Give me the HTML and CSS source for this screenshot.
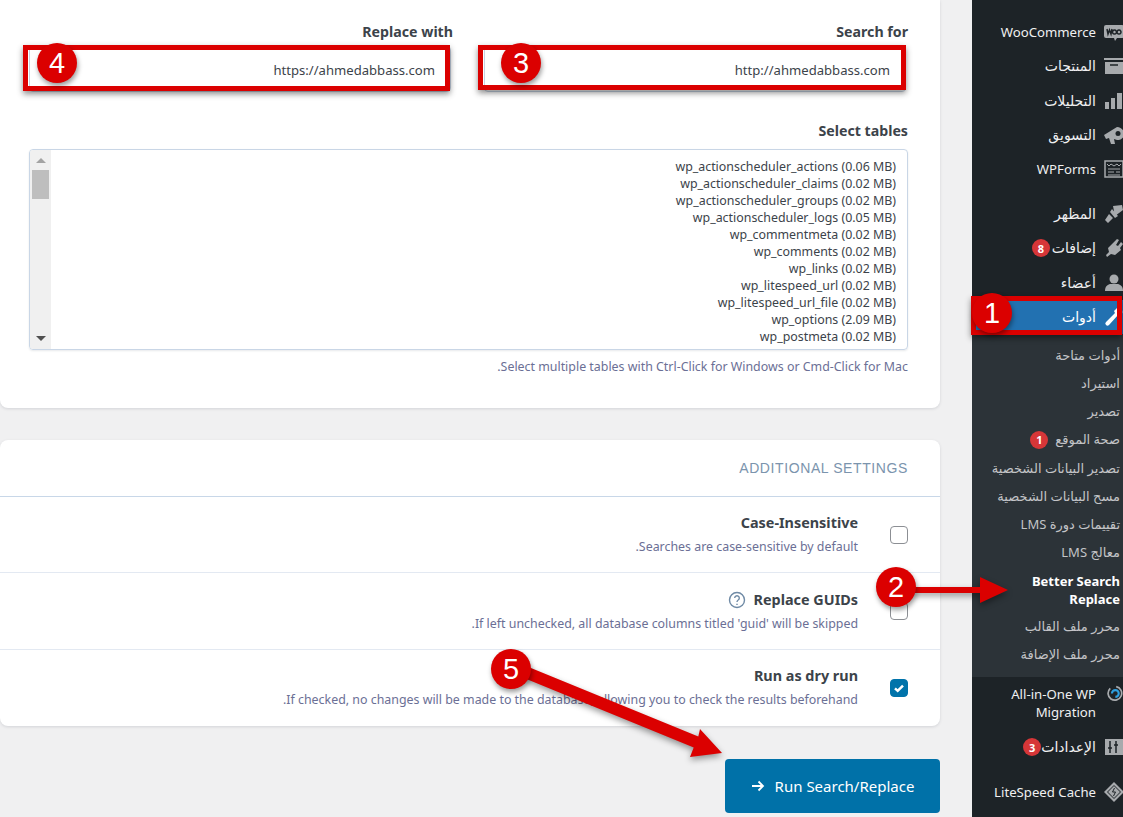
FILE: index.html
```html
<!DOCTYPE html>
<html lang="ar" dir="rtl">
<head>
<meta charset="utf-8">
<title>Better Search Replace</title>
<link rel="stylesheet" href="styles.css">
</head>
<body>
<aside class="sidebar">
  <nav class="menu menu-top">
    <a class="item"><span class="label latin" dir="ltr">WooCommerce</span><svg class="ic" viewBox="0 0 20 20"><path class="f" d="M2 3h16a2 2 0 0 1 2 2v9a2 2 0 0 1-2 2h-5l-2 3-1-3H2a2 2 0 0 1-2-2V5a2 2 0 0 1 2-2z"/><path class="k" d="M3 7l1 5 1.500-4 1.500 4 1-5M10.500 8a2 2 0 1 0 .01 0M15 8a2 2 0 1 0 .01 0"/></svg></a>
    <a class="item"><span class="label">المنتجات</span><svg class="ic" viewBox="0 0 20 20"><path class="f" d="M0 2h20v2H0zM1 6h18v12H1z"/><path class="k" d="M6 9h8"/></svg></a>
    <a class="item"><span class="label">التحليلات</span><svg class="ic" viewBox="0 0 20 20"><path class="f" d="M1 11h4v7H1zM7 7h4v11H7zM13 2h5v16h-5z"/></svg></a>
    <a class="item"><span class="label">التسويق</span><svg class="ic" viewBox="0 0 20 20"><path class="f" d="M0 10L13 2c4 0 7 3 7 7s-3 6-7 6l-3-1 1 5H7l-2-6-3 1z"/><circle class="d" cx="14" cy="8.500" r="2.500"/></svg></a>
    <a class="item"><span class="label latin" dir="ltr">WPForms</span><svg class="ic" viewBox="0 0 20 20"><path class="o" d="M1 2h18v16H1z"/><path class="k2" d="M3 5l2 2 2-2 3 2 3-2 2 2 2-2M4 10h12M4 13h6M12 13h4M4 16h12"/></svg></a>
  </nav>
  <nav class="menu menu-mid">
    <a class="item"><span class="label">المظهر</span><svg class="ic" viewBox="0 0 20 20"><path class="f" d="M9 2l9-1 1 5-8 6zM8 5l6 7-3 2-5-6zM5 10l4 4-5 5-3-3z"/></svg></a>
    <a class="item"><span class="label">إضافات</span><span class="badge badge-plugins">8</span><svg class="ic" viewBox="0 0 20 20"><path class="f" d="M13 1l2 1-3 5 2 1 3-4 2 2-3 4 1 2-6 5-4-1-4 3-1-2 3-3-1-4z"/></svg></a>
    <a class="item"><span class="label">أعضاء</span><svg class="ic" viewBox="0 0 20 20"><circle class="f" cx="10" cy="6" r="4.500"/><path class="f" d="M1 18c0-5 3-7 6-7h6c3 0 6 2 6 7z"/></svg></a>
    <a class="item item-active"><span class="label">أدوات</span><svg class="ic" viewBox="0 0 20 20"><path class="w" d="M15 1a4 4 0 0 1 2 7l-1 1-2-1-9 10a2 2 0 0 1-3-3l9-9-1-2 3-3z"/></svg></a>
  </nav>
  <nav class="submenu">
    <a class="sub">أدوات متاحة</a>
    <a class="sub">استيراد</a>
    <a class="sub">تصدير</a>
    <a class="sub">صحة الموقع<span class="badge">1</span></a>
    <a class="sub">تصدير البيانات الشخصية</a>
    <a class="sub">مسح البيانات الشخصية</a>
    <a class="sub">تقييمات دورة LMS</a>
    <a class="sub">معالج LMS</a>
    <a class="sub sub-current" dir="rtl">Better Search Replace</a>
    <a class="sub">محرر ملف القالب</a>
    <a class="sub">محرر ملف الإضافة</a>
  </nav>
  <nav class="menu">
    <a class="item item-tall"><span class="label latin">All-in-One WP Migration</span><svg class="ic ic-small" viewBox="0 0 20 20"><path class="ring" d="M5 4a8 8 0 1 0 7-2"/><path class="ring-blue" d="M7 10a4 4 0 1 1 4 4"/></svg></a>
    <a class="item item-settings"><span class="label">الإعدادات</span><span class="badge badge-tight">3</span><svg class="ic" viewBox="0 0 20 20"><path class="f" d="M1 2h18v16H1z"/><path class="k" d="M6 4v12M4 11h4M12 4v12M10 8h4"/></svg></a>
    <a class="item item-last"><span class="label latin" dir="ltr">LiteSpeed Cache</span><svg class="ic" viewBox="0 0 20 20"><path class="f" d="M10 0l10 10-10 10L0 10z"/><path class="k-thin" d="M10 3.500L16.500 10 10 16.500 3.500 10z"/><path class="k-thin" d="M10.500 6l-2 4h3l-2 4"/></svg></a>
  </nav>
</aside>

<main class="content">
  <section class="card card-form">
    <div class="fields">
      <div class="group">
        <div class="field-label">Search for</div>
        <div class="field"><span dir="ltr">http://ahmedabbass.com</span></div>
      </div>
      <div class="group">
        <div class="field-label">Replace with</div>
        <div class="field"><span dir="ltr">https://ahmedabbass.com</span></div>
      </div>
    </div>
    <div class="field-label tables-label">Select tables</div>
    <div class="tables">
      <div class="rows">
        <div dir="ltr">wp_actionscheduler_actions (0.06 MB)</div>
        <div dir="ltr">wp_actionscheduler_claims (0.02 MB)</div>
        <div dir="ltr">wp_actionscheduler_groups (0.02 MB)</div>
        <div dir="ltr">wp_actionscheduler_logs (0.05 MB)</div>
        <div dir="ltr">wp_commentmeta (0.02 MB)</div>
        <div dir="ltr">wp_comments (0.02 MB)</div>
        <div dir="ltr">wp_links (0.02 MB)</div>
        <div dir="ltr">wp_litespeed_url (0.02 MB)</div>
        <div dir="ltr">wp_litespeed_url_file (0.02 MB)</div>
        <div dir="ltr">wp_options (2.09 MB)</div>
        <div dir="ltr">wp_postmeta (0.02 MB)</div>
      </div>
      <div class="scrollbar">
        <span class="tri tri-up"></span>
        <span class="thumb"></span>
        <span class="tri tri-down"></span>
      </div>
    </div>
    <p class="hint">Select multiple tables with Ctrl-Click for Windows or Cmd-Click for Mac.</p>
  </section>

  <section class="card card-settings">
    <h2 class="settings-title">Additional Settings</h2>
    <div class="setting setting-first">
      <span class="check"></span>
      <div class="setting-text">
        <div class="setting-name">Case-Insensitive</div>
        <div class="setting-desc">Searches are case-sensitive by default.</div>
      </div>
    </div>
    <div class="setting">
      <span class="check"></span>
      <div class="setting-text">
        <div class="setting-name">Replace GUIDs<svg class="help" viewBox="0 0 18 18"><circle cx="9" cy="9" r="7.500"/><path d="M6.700 7a2.300 2.300 0 1 1 3.500 2c-.8.500-1.200 1-1.200 2"/><path d="M9 12.700v1.200"/></svg></div>
        <div class="setting-desc">If left unchecked, all database columns titled 'guid' will be skipped.</div>
      </div>
    </div>
    <div class="setting setting-last">
      <span class="check check-on"><svg viewBox="0 0 18 18"><path d="M4.500 9.500l3 2.700 6-6"/></svg></span>
      <div class="setting-text">
        <div class="setting-name">Run as dry run</div>
        <div class="setting-desc">If checked, no changes will be made to the database, allowing you to check the results beforehand.</div>
      </div>
    </div>
  </section>

  <div class="actions">
    <a class="run"><span>Run Search/Replace</span><svg viewBox="0 0 14 14"><path d="M1 7h11M7.500 2.500L12 7l-4.500 4.500"/></svg></a>
  </div>
</main>

<div class="mark mark-box mark-box-4"></div>
<div class="mark mark-box mark-box-3"></div>
<div class="mark mark-box mark-box-1"></div>
<svg class="arrows" viewBox="0 0 1123 817">
  <path d="M912 587h68v-10l28 13-28 13v-10h-68z"/>
  <path d="M527.300 666.500L698.300 736.500L700 729L722 753L690 757L693.700 747.500L522.700 677.500z"/>
</svg>
<div class="mark pin pin-4">4</div>
<div class="mark pin pin-3">3</div>
<div class="mark pin pin-1">1</div>
<div class="mark pin pin-2">2</div>
<div class="mark pin pin-5">5</div>
</body>
</html>
```
FILE: styles.css
```css
* { box-sizing: border-box; }
html, body { margin: 0; padding: 0; }
body {
  position: relative;
  display: flex;
  width: 1123px;
  height: 817px;
  overflow: hidden;
  background: #f0f0f1;
  font-family: "Noto Sans", "DejaVu Sans", sans-serif;
  font-size: 13px;
  color: #3c434a;
}

/* sidebar */
.sidebar {
  flex: 0 0 151px;
  background: #1d2327;
  padding-top: 15px;
  margin-left: 32px;
  overflow: hidden;
}
.menu-top { padding-bottom: 10.500px; }
.item {
  display: flex;
  align-items: center;
  min-height: 34.300px;
  padding-right: 27px;
  position: relative;
  color: #f0f0f1;
  font-size: 14px;
  line-height: 18px;
}
.item-active { background: #2271b1; color: #fff; }
.item-tall { padding: 8px 27px 8px 6px; }
.item-settings { margin-top: 1px; }
.item-last { margin-top: 11px; }
.label { display: block; }
.latin { font-size: 13.200px; }
.ic {
  position: absolute;
  right: -1px;
  top: 7px;
  width: 20px;
  height: 20px;
}
.ic-small { width: 17px; height: 17px; right: 0; top: 8px; }
.f { fill: #a7aaad; }
.d { fill: #1d2327; }
.w { fill: #fff; }
.k { fill: none; stroke: #1d2327; stroke-width: 1.500; }
.k-thin { fill: none; stroke: #1d2327; stroke-width: 1; }
.k2 { fill: none; stroke: #a7aaad; stroke-width: 1; }
.o { fill: none; stroke: #a7aaad; stroke-width: 1.500; }
.ring { fill: none; stroke: #a7aaad; stroke-width: 2; }
.ring-blue { fill: none; stroke: #2e9fe0; stroke-width: 2.500; }
.badge {
  display: inline-flex;
  align-items: center;
  justify-content: center;
  width: 18px;
  height: 18px;
  margin-right: 7px;
  border-radius: 50%;
  background: #d63638;
  color: #fff;
  font-size: 11px;
  font-weight: 700;
  line-height: 1;
}
.badge-plugins { margin-right: 2px; }
.badge-tight { margin-right: 0; }
.submenu {
  background: #2c3338;
  padding: 6.500px 0 9px;
}
.sub {
  display: block;
  padding: 5px 3px 5px 8px;
  color: #c3c4c7;
  font-size: 13px;
  line-height: 18.150px;
}
.sub-current {
  color: #fff;
  font-weight: 700;
  font-size: 13px;
  text-align: right;
  padding-top: 6px;
  padding-bottom: 3px;
  padding-left: 24px;
}

/* content */
.content { flex: 0 0 940px; }
.card {
  background: #fff;
  border-radius: 8px;
  box-shadow: 0 1px 3px rgba(60, 70, 90, .16);
}
.card-form {
  border-radius: 0 0 8px 8px;
  height: 408px;
  padding: 23px 32px 0 29px;
}
.fields {
  display: grid;
  grid-template-columns: 424px 424px;
  column-gap: 31px;
}
.field-label {
  font-size: 14.200px;
  font-weight: 700;
  line-height: 18px;
  color: #3c434a;
}
.field {
  margin: 5px 2px 0 0;
  height: 46px;
  padding: 1px 15px 0;
  display: flex;
  align-items: center;
  background: #fff;
  border: 1px solid #c5d2e2;
  border-radius: 4px;
  font-size: 13.100px;
  color: #3c434a;
}
.tables-label { margin-top: 30px; }
.tables {
  display: flex;
  justify-content: space-between;
  margin: 9px 0 0;
  height: 201px;
  border: 1px solid #c9d6e6;
  border-radius: 4px;
  box-shadow: 0 1px 2px rgba(60, 70, 90, .12);
  overflow: hidden;
}
.rows {
  flex: 1;
  padding: 8px 11px 0 0;
  font-size: 12.400px;
  line-height: 17px;
  text-align: right;
  color: #3c434a;
}
.rows div { text-align: right; }
.scrollbar {
  flex: 0 0 21px;
  display: flex;
  flex-direction: column;
  align-items: center;
  background: #f0f0f0;
  padding-top: 8px;
}
.tri { width: 0; height: 0; border-left: 5px solid transparent; border-right: 5px solid transparent; }
.tri-up { border-bottom: 5px solid #a3a3a3; }
.tri-down { border-top: 5px solid #505050; margin-top: auto; margin-bottom: 8px; }
.thumb { width: 17px; height: 29px; margin-top: 7px; background: #bebebe; }
.hint {
  margin: 8px 0 0;
  font-size: 12.400px;
  line-height: 18px;
  color: #6b6f95;
}

.card-settings {
  margin-top: 32px;
  height: 286px;
}
.settings-title {
  margin: 0;
  height: 57px;
  padding: 0 32px;
  display: flex;
  align-items: center;
  font-family: "Liberation Sans", sans-serif;
  font-size: 14px;
  font-weight: 400;
  letter-spacing: .6px;
  text-transform: uppercase;
  color: #7b94ad;
  border-bottom: 1px solid #c8d7e8;
}
.setting {
  display: flex;
  align-items: center;
  height: 77px;
  padding: 0 32px;
  border-bottom: 1px solid #e3e9f2;
}
.setting-first { height: 76px; }
.setting-last { height: 75px; border-bottom: 0; }
.check {
  flex: 0 0 18px;
  width: 18px;
  height: 18px;
  margin-left: 32px;
  border: 1px solid #8c8f94;
  border-radius: 4px;
  background: #fff;
}
.check-on { background: #0073aa; border-color: #0073aa; }
.check-on svg { display: block; width: 16px; height: 16px; fill: none; stroke: #fff; stroke-width: 2.800; }
.setting-text { flex: 1; padding-top: 1px; }
.setting-name {
  display: flex;
  align-items: center;
  font-size: 14.400px;
  font-weight: 700;
  line-height: 18px;
  color: #3c434a;
}
.help {
  width: 18px;
  height: 18px;
  margin-right: 8px;
  fill: none;
  stroke: #6f8aa5;
  stroke-width: 1.400;
}
.setting-desc {
  margin-top: 6px;
  font-size: 12.400px;
  line-height: 18px;
  color: #6b6f95;
}
.actions { display: flex; margin-top: 33px; }
.run {
  display: flex;
  align-items: center;
  justify-content: center;
  gap: 10px;
  width: 215px;
  height: 54px;
  background: #0071a8;
  border-radius: 4px;
  color: #fff;
  font-size: 15px;
}
.run svg { width: 14px; height: 14px; fill: none; stroke: #fff; stroke-width: 1.800; }

/* annotations laid over the screenshot */
.mark { position: absolute; }
.mark-box {
  border: 5px solid #db0000;
  box-shadow: 0 3px 6px rgba(0, 0, 0, .45);
}
.mark-box-4 { left: 23px; top: 45px; width: 427px; height: 46px; }
.mark-box-3 { left: 478px; top: 45px; width: 428px; height: 45px; }
.mark-box-1 { left: 971px; top: 296px; width: 151px; height: 39px; }
.arrows {
  position: absolute;
  left: 0;
  top: 0;
  width: 1123px;
  height: 817px;
  pointer-events: none;
  fill: #db0000;
  filter: drop-shadow(0 3px 3px rgba(0, 0, 0, .4));
}
.pin {
  width: 40px;
  height: 40px;
  border-radius: 50%;
  background: #db0000;
  color: #fff;
  font-family: "Liberation Sans", sans-serif;
  font-size: 29px;
  line-height: 40px;
  text-align: center;
  box-shadow: 1px 3px 5px rgba(0, 0, 0, .4);
}
.pin-4 { left: 37px; top: 43px; }
.pin-3 { left: 501px; top: 43px; }
.pin-1 { left: 972px; top: 293px; }
.pin-2 { left: 876px; top: 567px; }
.pin-5 { left: 491px; top: 649px; }
```
